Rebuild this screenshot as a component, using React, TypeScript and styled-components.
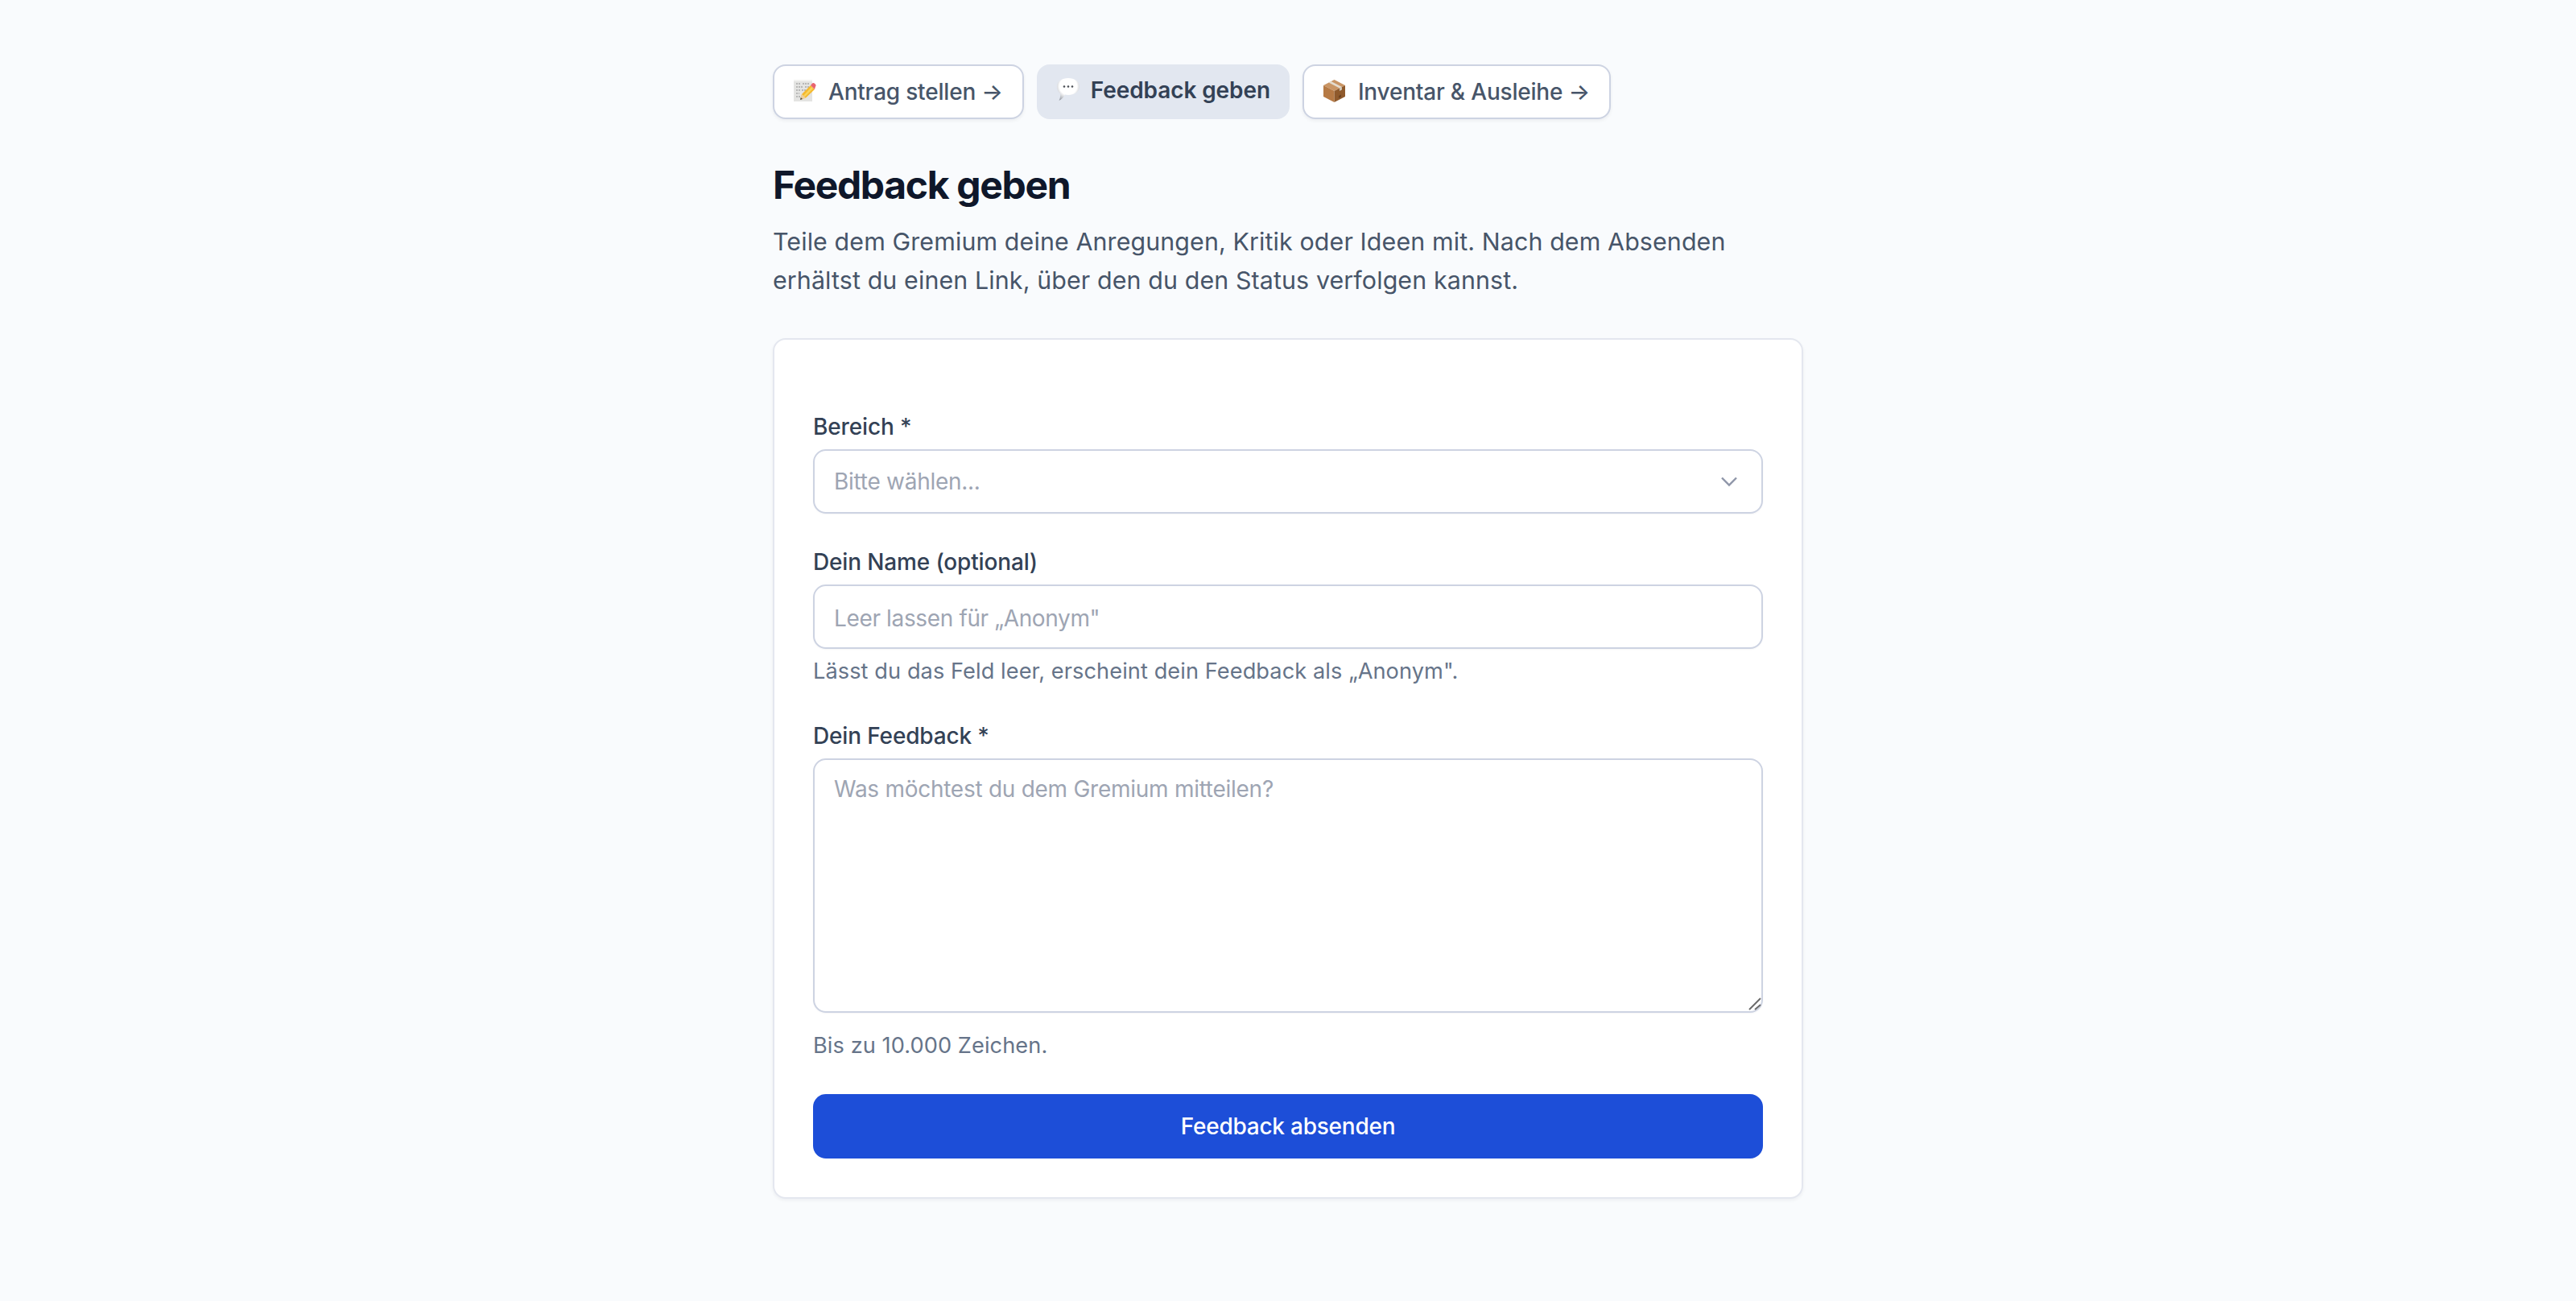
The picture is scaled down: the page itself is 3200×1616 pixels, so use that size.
import React from 'react';
import styled, { createGlobalStyle } from 'styled-components';

const GlobalStyle = createGlobalStyle`
  * {
    box-sizing: border-box;
  }

  html,
  body {
    margin: 0;
    background-color: #f9fbfd;
    font-family: 'Inter', 'Liberation Sans', sans-serif;
    color: #0f172a;
  }
`;

const Page = styled.main`
  width: 1280px;
  margin: 0 auto;
  padding: 80px 0;
`;

const TabBar = styled.nav`
  display: flex;
  gap: 16px;
  margin-bottom: 50px;
`;

const Tab = styled.a<{ $active?: boolean }>`
  display: flex;
  align-items: flex-start;
  gap: 15px;
  padding: 12px 24px;
  border-radius: 16px;
  font-size: 28px;
  line-height: 40px;
  text-decoration: none;
  cursor: pointer;
  white-space: nowrap;
  letter-spacing: ${({ $active }) => ($active ? '-0.1px' : '-0.2px')};
  background-color: ${({ $active }) => ($active ? '#e2e7f0' : '#ffffff')};
  color: ${({ $active }) => ($active ? '#334155' : '#475569')};
  font-weight: ${({ $active }) => ($active ? 600 : 500)};
  border: ${({ $active }) => ($active ? 'none' : '2px solid #cdd3e2')};
  box-shadow: ${({ $active }) => ($active ? 'none' : '0 2px 4px rgba(15, 23, 42, 0.06)')};
`;

const Emoji = styled.svg`
  width: 28px;
  height: 40px;
  flex: none;
  overflow: visible;
`;

const Title = styled.h1`
  margin: 0 0 14px;
  font-size: 48px;
  line-height: 64px;
  font-weight: 700;
  letter-spacing: -1.34px;
  color: #0f172a;
`;

const Intro = styled.p`
  margin: 0 0 48px;
  font-size: 30.4px;
  line-height: 48px;
  letter-spacing: 0.11px;
  color: #475569;
`;

const Card = styled.form`
  display: flex;
  flex-direction: column;
  gap: 40px;
  padding: 88px 48px 48px;
  background-color: #ffffff;
  border: 2px solid #e4e7ef;
  border-radius: 16px;
  box-shadow: 0 2px 4px rgba(15, 23, 42, 0.05);
`;

const Field = styled.div`
  display: flex;
  flex-direction: column;
`;

const Label = styled.label`
  margin-bottom: 8px;
  font-size: 28px;
  line-height: 40px;
  font-weight: 500;
  letter-spacing: -0.15px;
  color: #334155;
`;

const controlStyles = `
  display: block;
  width: 100%;
  padding: 16px 24px;
  background-color: #ffffff;
  border: 2px solid #cdd3e2;
  border-radius: 16px;
  font-family: 'Inter', 'Liberation Sans', sans-serif;
  font-size: 28px;
  line-height: 44px;
  letter-spacing: -0.27px;
  color: #334155;
  outline: none;
  box-shadow: 0 1px 2px rgba(15, 23, 42, 0.04);

  &::placeholder {
    color: #9ea5b3;
    opacity: 1;
  }
`;

const SelectWrap = styled.div`
  position: relative;
`;

const Select = styled.select`
  ${controlStyles}
  height: 80px;
  appearance: none;
  color: #9ea5b3;
`;

const Chevron = styled.svg`
  position: absolute;
  top: 28px;
  right: 30px;
  width: 24px;
  height: 24px;
  pointer-events: none;
`;

const Input = styled.input`
  ${controlStyles}
  height: 80px;
  padding-top: 18px;
  padding-bottom: 14px;
  letter-spacing: -0.36px;
`;

const TextareaWrap = styled.div`
  position: relative;
  margin-bottom: 13px;
`;

const Textarea = styled.textarea`
  ${controlStyles}
  height: 316px;
  padding-top: 14px;
  resize: none;
`;

const Grip = styled.svg`
  position: absolute;
  right: 2px;
  bottom: 2px;
  width: 20px;
  height: 20px;
  pointer-events: none;
`;

const Help = styled.p`
  margin: 8px 0 0;
  font-size: 27.2px;
  line-height: 40px;
  letter-spacing: 0.07px;
  color: #667489;
`;

const Submit = styled.button`
  height: 80px;
  border: none;
  border-radius: 16px;
  background-color: #1d4ed8;
  color: #ffffff;
  font-family: 'Inter', 'Liberation Sans', sans-serif;
  font-size: 28px;
  font-weight: 500;
  letter-spacing: -0.24px;
  cursor: pointer;
`;

const MemoIcon = () => (
  <Emoji viewBox="0 0 28 40" aria-hidden="true">
    <rect x="0" y="5" width="23" height="27" fill="#e4e4e2" />
    <rect x="0" y="5" width="23" height="2" fill="#f3f3f1" />
    <path
      d="M3 10h6M11 10h8M3 14h9M14 14h6M3 18h5M10 18h6M3 22h4M3 26h5"
      stroke="#8b8b8b"
      strokeWidth="1"
      strokeDasharray="2 1"
    />
    <path d="M8 30l2-7L21 12l5 5-11 10.500z" fill="#f5b82e" />
    <path d="M12 25l10-11 2 2-10 10z" fill="#f9d55c" />
    <path d="M8 30l2-7 5 4.500z" fill="#eccf9f" />
    <path d="M8 30l.8-3 2.200 2z" fill="#4b4b4b" />
    <path d="M21 12l2-2.500c1-.8 2-.8 3 .2l1 1c.8 1 .8 2-.1 3L26 17z" fill="#e8636f" />
  </Emoji>
);

const BubbleIcon = () => (
  <Emoji viewBox="0 0 28 40" aria-hidden="true">
    <defs>
      <radialGradient id="bubble" cx="0.5" cy="0.36" r="0.7">
        <stop offset="0.55" stopColor="#ffffff" />
        <stop offset="1" stopColor="#979ca5" />
      </radialGradient>
    </defs>
    <path
      d="M15 5c7.500 0 14 4 14 10.500S22.500 26 15 26c-1.400 0-2.700-.1-3.900-.4C9.500 29 6.500 32 3.500 33c1.200-2 1.800-5 1.700-8.500C2.600 22.500 1 19.500 1 15.500 1 9 7.500 5 15 5z"
      fill="url(#bubble)"
    />
    <circle cx="10" cy="15.500" r="1.300" fill="#4b4f55" />
    <circle cx="15" cy="15.500" r="1.300" fill="#4b4f55" />
    <circle cx="20" cy="15.500" r="1.300" fill="#4b4f55" />
  </Emoji>
);

const BoxIcon = () => (
  <Emoji viewBox="0 0 28 40" aria-hidden="true">
    <path d="M13.500 5L27 12 13.500 19 0 12z" fill="#c99565" />
    <path d="M0 12l13.500 7v14L0 26z" fill="#b67a45" />
    <path d="M27 12l-13.500 7v14L27 26z" fill="#8f5a2c" />
    <path d="M6.500 8.500l13.500 7 3-1.500-13.500-7z" fill="#e4dccf" />
    <path d="M20 15.500l3-1.500v3.600l-3 1.500z" fill="#cfc7b9" />
    <path d="M19 25l3-1.500v3l-3 1.500z" fill="#6d4320" />
  </Emoji>
);

const App: React.FC = () => {
  return (
    <>
      <GlobalStyle />
      <Page>
        <TabBar>
          <Tab>
            <MemoIcon />
            Antrag stellen →
          </Tab>
          <Tab $active>
            <BubbleIcon />
            Feedback geben
          </Tab>
          <Tab>
            <BoxIcon />
            Inventar &amp; Ausleihe →
          </Tab>
        </TabBar>

        <Title>Feedback geben</Title>
        <Intro>
          Teile dem Gremium deine Anregungen, Kritik oder Ideen mit. Nach dem Absenden erhältst du
          einen Link, über den du den Status verfolgen kannst.
        </Intro>

        <Card onSubmit={(e) => e.preventDefault()}>
          <Field>
            <Label htmlFor="area">Bereich *</Label>
            <SelectWrap>
              <Select id="area" defaultValue="">
                <option value="">Bitte wählen...</option>
              </Select>
              <Chevron viewBox="0 0 24 24" fill="none" stroke="#8e95a8" strokeWidth="2.4" aria-hidden="true">
                <path d="M3 7.500l9 9 9-9" />
              </Chevron>
            </SelectWrap>
          </Field>

          <Field>
            <Label htmlFor="name">Dein Name (optional)</Label>
            <Input id="name" type="text" placeholder={'Leer lassen für „Anonym"'} />
            <Help>Lässt du das Feld leer, erscheint dein Feedback als „Anonym".</Help>
          </Field>

          <Field>
            <Label htmlFor="feedback">Dein Feedback *</Label>
            <TextareaWrap>
              <Textarea id="feedback" placeholder="Was möchtest du dem Gremium mitteilen?" />
              <Grip viewBox="0 0 20 20" fill="none" stroke="#6b6b6b" strokeWidth="2" aria-hidden="true">
                <path d="M5 18L19 4M12 18l7-6" />
              </Grip>
            </TextareaWrap>
            <Help>Bis zu 10.000 Zeichen.</Help>
          </Field>

          <Submit type="submit">Feedback absenden</Submit>
        </Card>
      </Page>
    </>
  );
};

export default App;
